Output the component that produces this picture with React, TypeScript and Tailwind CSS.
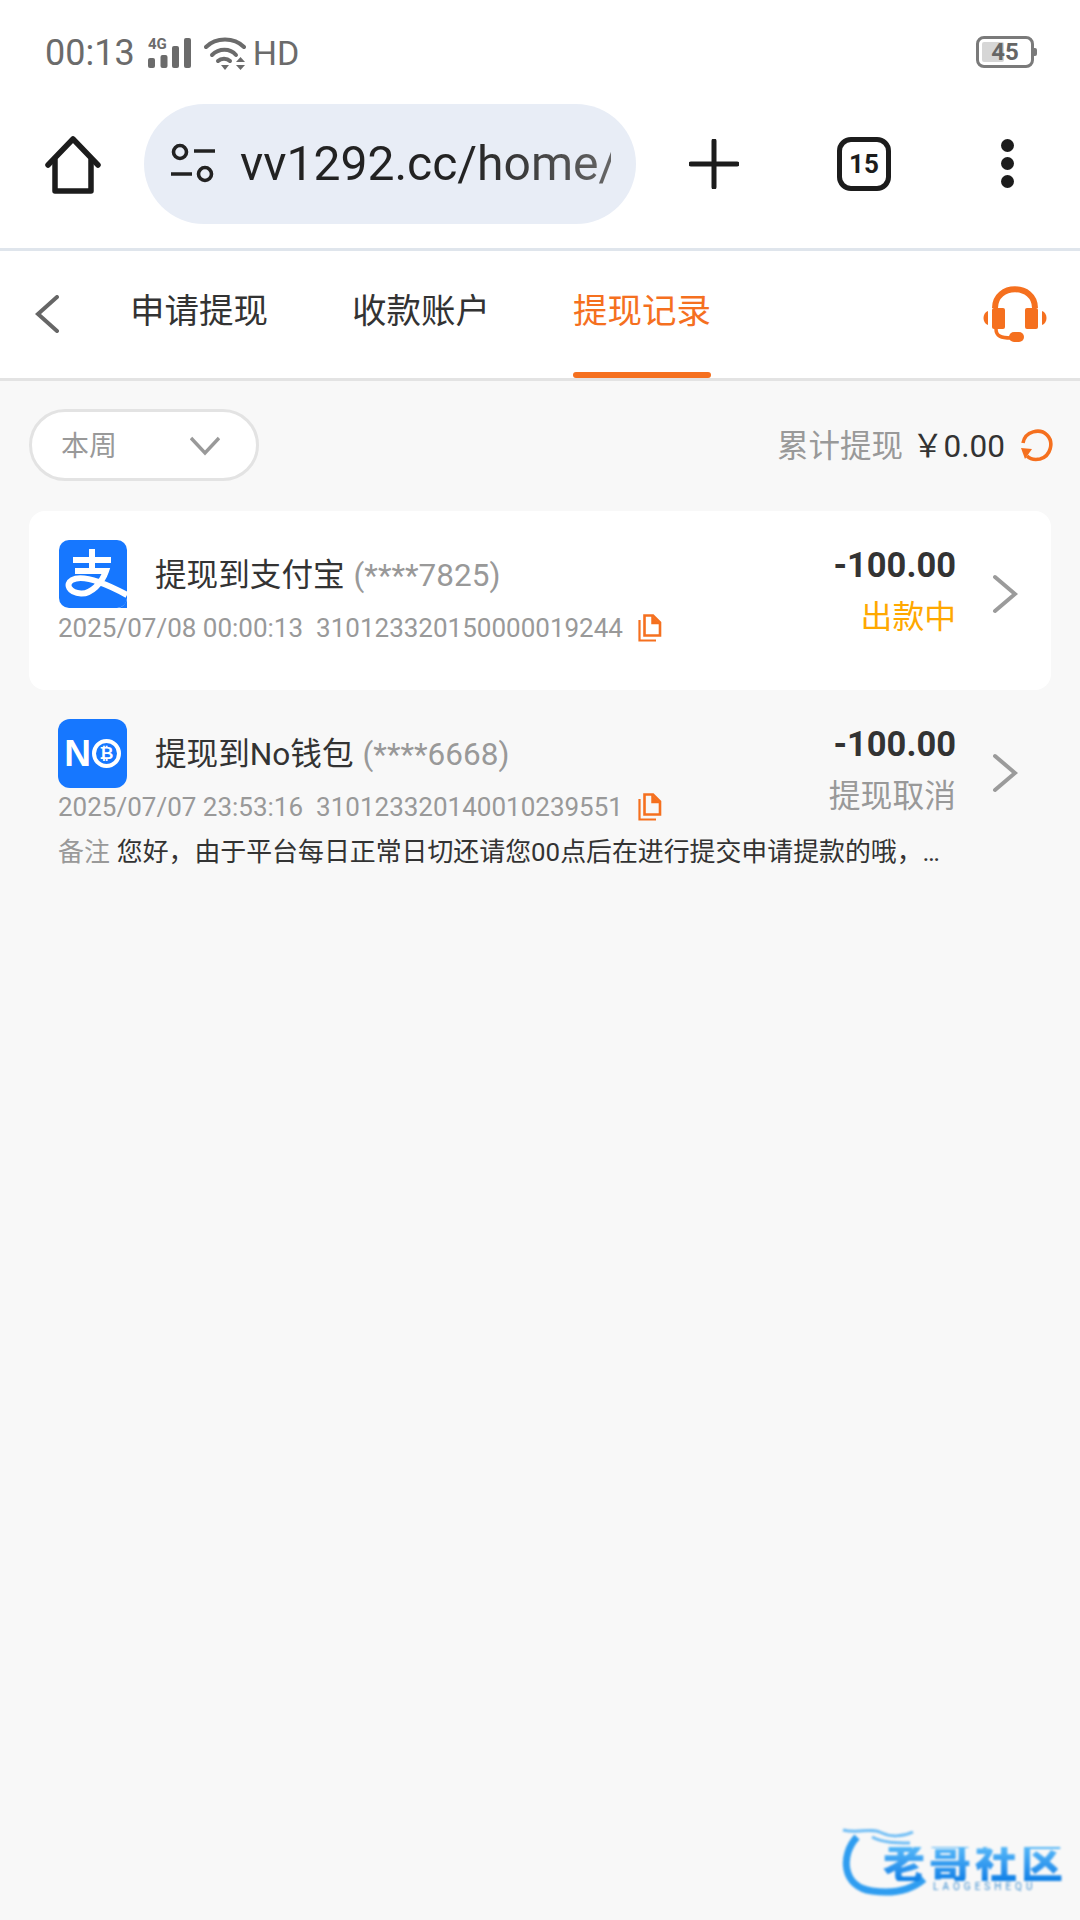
const font = "[font-family:Roboto,'Noto_Sans_CJK_SC',sans-serif]";

function SignalIcon() {
  return (
    <svg width="44" height="32" viewBox="0 0 44 32" className="shrink-0">
      <text x="0" y="12" fontSize="15" fontWeight="700" fill="#6b6b6b" fontFamily="Roboto">4G</text>
      <rect x="0" y="21" width="7" height="10" rx="2" fill="#6b6b6b" />
      <rect x="12.5" y="18" width="7" height="13" rx="2" fill="#6b6b6b" />
      <rect x="24" y="9" width="7" height="22" rx="2" fill="#6b6b6b" />
      <rect x="36" y="1" width="7" height="30" rx="2" fill="#6b6b6b" />
    </svg>
  );
}

function WifiIcon() {
  return (
    <svg width="42" height="33" viewBox="0 0 42 33" className="shrink-0" fill="none" stroke="#6b6b6b" strokeWidth="4" strokeLinecap="round">
      <path d="M2 10 C12 0 30 0 40 10" />
      <path d="M8 18 C15 11 26 11 32 18" />
      <path d="M14 24 C17 21 23 21 26 24" />
      <path d="M17 28 L25 28 L21 33 Z" fill="#6b6b6b" stroke="none" />
      <path d="M32 25 L36.5 20 L41 25 Z" fill="#6b6b6b" stroke="none" />
      <path d="M32 28 L41 28 L36.5 33 Z" fill="#6b6b6b" stroke="none" />
    </svg>
  );
}

function HomeIcon() {
  return (
    <svg width="56" height="58" viewBox="0 0 56 58" fill="none" stroke="#1c1c1c" strokeWidth="5.5" strokeLinejoin="round" strokeLinecap="round">
      <path d="M3 29 L28 3 L53 29" />
      <path d="M10 24 V55 H46 V24" />
    </svg>
  );
}

function TuneIcon() {
  return (
    <svg width="46" height="42" viewBox="0 0 46 42" fill="none" stroke="#222" strokeWidth="3.6" className="shrink-0">
      <circle cx="10" cy="9" r="6.5" />
      <path d="M24 8 H45" />
      <circle cx="35" cy="31" r="6.5" />
      <path d="M1 31 H22" />
    </svg>
  );
}

function CopyIcon() {
  return (
    <svg width="24" height="28" viewBox="0 0 24 28" className="shrink-0" fill="none" stroke="#f5701f" strokeWidth="2.6">
      <path d="M6.5 1.5 H15 L22 8.5 V21.5 H6.5 Z" />
      <path d="M14 2 V9.5 H22" fill="#f5701f" stroke="#f5701f" strokeWidth="1.5" />
      <path d="M1.5 6 V26.5 H18" strokeWidth="2.2" />
    </svg>
  );
}

function ChevronRight() {
  return (
    <svg width="26" height="40" viewBox="0 0 26 40" fill="none" stroke="#9b9b9b" strokeWidth="4" strokeLinecap="round" className="shrink-0">
      <path d="M3 3 L23 20 L3 37" />
    </svg>
  );
}

function AlipayLogo() {
  return (
    <svg width="68" height="68" viewBox="0 0 68 68" className="ml-px shrink-0">
      <rect width="68" height="68" rx="10" fill="#1677ff" />
      <g fill="none" stroke="#fff" strokeWidth="6">
        <path d="M14 20 H52" />
        <path d="M33 9 V31" />
        <path d="M16 31 H47 C43 43 32 54 22 53.5 C10 53 6 44 13 40 C22 35 42 41 68 55" />
      </g>
      <path d="M68 55 V58 C68 63 63 68 58 68 H68 Z" fill="#1677ff" />
    </svg>
  );
}

function NoLogo() {
  return (
    <div className="relative flex h-[69px] w-[69px] shrink-0 items-center justify-center gap-px rounded-[12px] bg-[#1677ff]">
      <span className="text-[37px] leading-none font-black text-white [font-family:'Liberation_Sans',sans-serif]">N</span>
      <span className="flex h-[29px] w-[29px] items-center justify-center rounded-full border-[4px] border-white text-[17px] leading-none font-bold text-white">
        ₿
      </span>
    </div>
  );
}

function Headset() {
  return (
    <svg width="64" height="56" viewBox="0 0 64 56" fill="#f5701f">
      <path d="M12 22 C12 -3 52 -3 52 22" fill="none" stroke="#f5701f" strokeWidth="6" />
      <rect x="9" y="22" width="13" height="21" rx="2" />
      <rect x="42" y="22" width="13" height="21" rx="2" />
      <path d="M5 25 V39 C-1 37 -1 27 5 25 Z" />
      <path d="M59 25 V39 C65 37 65 27 59 25 Z" />
      <path d="M13 43 C13 50 18 52 28 52" fill="none" stroke="#f5701f" strokeWidth="3.5" />
      <rect x="26" y="46" width="15" height="10" rx="5" />
    </svg>
  );
}

function RefreshIcon() {
  return (
    <svg width="33" height="33" viewBox="0 0 33 33" fill="none" stroke="#f5701f" strokeWidth="3.6">
      <path d="M3 14 C5 2 20 -1 27 6 C34 13 31 27 20 30 C15 31 10 30 7 27" />
      <path d="M1 19 L12 20 L5 30 Z" fill="#f5701f" stroke="none" />
    </svg>
  );
}

type RecordProps = {
  logo: React.ReactNode;
  title: string;
  account: string;
  date: string;
  orderNo: string;
  status: string;
  statusClass: string;
  note?: string;
  cardClass: string;
};

function RecordRow({ logo, title, account, date, orderNo, status, statusClass, note, cardClass }: RecordProps) {
  return (
    <div className={cardClass}>
      <div className="flex items-start">
        <div className="min-w-0 flex-1">
          <div className="flex h-[68px] items-center">
            {logo}
            <span className="mt-[4px] ml-[28px] text-[31.6px] leading-none text-[#333]">{title}</span>
            <span className="mt-[4px] ml-[9px] text-[31.5px] leading-none text-[#999]">{account}</span>
          </div>
          <div className="mt-[3px] flex h-[34px] items-center text-[26px] leading-none text-[#999]">
            <span>{date}</span>
            <span className="ml-[13px]">{orderNo}</span>
            <span className="ml-[15px]">
              <CopyIcon />
            </span>
          </div>
        </div>
        <div className="flex flex-col items-end pt-[5px] pr-[36px]">
          <span className="text-[34.5px] leading-[40px] font-bold text-[#333]">-100.00</span>
          <span className={`mt-[12px] text-[31.8px] leading-[40px] ${statusClass}`}>{status}</span>
        </div>
        <div className="mt-[34px] mr-[33px]">
          <ChevronRight />
        </div>
      </div>
      {note && (
        <div className="mt-[12px] flex h-[34px] items-center text-[25.9px] leading-none whitespace-nowrap">
          <span className="text-[#999]">备注</span>
          <span className="ml-[7px] text-[#333]">{note}</span>
        </div>
      )}
    </div>
  );
}

export default function App() {
  return (
    <div className={`relative flex h-[1920px] w-[1080px] flex-col overflow-hidden bg-[#f8f8f8] ${font}`}>
      {/* status bar */}
      <div className="flex h-[104px] shrink-0 items-start justify-between bg-white pt-[34px] pr-[46px] pl-[45px]">
        <div className="flex items-center text-[#6b6b6b]">
          <span className="text-[36px] leading-[38px]">00:13</span>
          <span className="ml-[13px]"><SignalIcon /></span>
          <span className="ml-[12px]"><WifiIcon /></span>
          <span className="ml-[7px] text-[34px] leading-[38px]">HD</span>
        </div>
        <div className="relative mt-[2px] h-[32px] w-[58px] rounded-[8px] border-[3px] border-[#7a7a7a]">
          <div className="absolute top-[3px] bottom-[3px] left-[3px] w-[22px] rounded-[2px] bg-[#d6d6d6]" />
          <span className="absolute inset-0 flex items-center justify-center text-[24px] leading-none font-bold text-[#666]">45</span>
          <div className="absolute top-[9px] -right-[6px] h-[8px] w-[3px] rounded-r-[2px] bg-[#7a7a7a]" />
        </div>
      </div>

      {/* browser toolbar */}
      <div className="flex h-[147px] shrink-0 items-start border-b-[3px] border-[#dfe5ec] bg-white pl-[45px]">
        <div className="mt-[32px]"><HomeIcon /></div>
        <div className="ml-[43px] flex h-[120px] w-[492px] items-center overflow-hidden rounded-full bg-[#e8edf6] pr-[25px] pl-[26px]">
          <TuneIcon />
          <div className="ml-[24px] overflow-hidden bg-gradient-to-r from-[#222] from-60% to-[#666] bg-clip-text text-[48px] leading-none whitespace-nowrap text-transparent">
            vv1292.cc/home/
          </div>
        </div>
        <svg width="50" height="50" viewBox="0 0 50 50" className="mt-[35px] ml-[53px]" stroke="#1c1c1c" strokeWidth="5" strokeLinecap="round">
          <path d="M25 2 V48 M2 25 H48" />
        </svg>
        <div className="mt-[33px] ml-[98px] flex h-[54px] w-[54px] items-center justify-center rounded-[14px] border-[5px] border-[#1c1c1c] text-[26px] leading-none font-bold text-[#1c1c1c]">
          15
        </div>
        <div className="mt-[35px] ml-[110px] flex flex-col gap-[5px]">
          <div className="h-[13px] w-[13px] rounded-full bg-[#1c1c1c]" />
          <div className="h-[13px] w-[13px] rounded-full bg-[#1c1c1c]" />
          <div className="h-[13px] w-[13px] rounded-full bg-[#1c1c1c]" />
        </div>
      </div>

      {/* tabs */}
      <div className="flex h-[130px] shrink-0 items-stretch border-b-[3px] border-[#e3e3e3] bg-white">
        <svg width="24" height="38" viewBox="0 0 24 38" fill="none" stroke="#666" strokeWidth="4" strokeLinecap="round" className="mt-[44px] ml-[35px]">
          <path d="M22 2 L3 19 L22 36" />
        </svg>
        <div className="ml-[71px] flex h-[127px] items-start pt-[37px] text-[34.5px] leading-[46px] text-[#333]">申请提现</div>
        <div className="ml-[84px] flex h-[127px] items-start pt-[37px] text-[34.5px] leading-[46px] text-[#333]">收款账户</div>
        <div className="relative ml-[83px] flex h-[127px] items-start pt-[37px] text-[34.5px] leading-[46px] text-[#f5701f]">
          提现记录
          <div className="absolute right-0 bottom-0 left-0 h-[6px] rounded-[3px] bg-[#f5701f]" />
        </div>
        <div className="mt-[35px] ml-auto mr-[33px]">
          <Headset />
        </div>
      </div>

      {/* filter row */}
      <div className="flex items-center justify-between pt-[28px] pr-[27px] pl-[29px]">
        <div className="flex h-[72px] w-[230px] items-center rounded-full border-[3px] border-[#e3e3e3] bg-white pr-[36px] pl-[29px]">
          <span className="mt-[4px] text-[28px] leading-none text-[#999]">本周</span>
          <svg width="30" height="20" viewBox="0 0 30 20" fill="none" stroke="#999" strokeWidth="3.4" className="mt-[2px] ml-auto">
            <path d="M1 2 L15 17 L29 2" />
          </svg>
        </div>
        <div className="flex items-center">
          <span className="mt-[4px] text-[31.5px] leading-none text-[#999]">累计提现</span>
          <span className="mt-[4px] ml-[9px] text-[31.5px] leading-none text-[#333]">￥0.00</span>
          <span className="ml-[15px]"><RefreshIcon /></span>
        </div>
      </div>

      {/* records */}
      <div className="mt-[30px] px-[29px]">
        <RecordRow
          logo={<AlipayLogo />}
          title="提现到支付宝"
          account="(****7825)"
          date="2025/07/08 00:00:13"
          orderNo="310123320150000019244"
          status="出款中"
          statusClass="text-[#ffa800]"
          cardClass="h-[179px] rounded-[16px] bg-white pt-[29px] pl-[29px]"
        />
        <RecordRow
          logo={<NoLogo />}
          title="提现到No钱包"
          account="(****6668)"
          date="2025/07/07 23:53:16"
          orderNo="310123320140010239551"
          status="提现取消"
          statusClass="text-[#999]"
          note="您好，由于平台每日正常日切还请您00点后在进行提交申请提款的哦，…"
          cardClass="pt-[29px] pl-[29px]"
        />
      </div>

      {/* watermark */}
      <div className="absolute top-[1825px] left-[842px] h-[76px] w-[222px] blur-[0.8px]">
        <svg width="222" height="76" viewBox="0 0 222 76" fill="none" className="absolute inset-0">
          <path d="M15 12 C-2 30 0 62 30 66 C50 69 68 66 82 54" stroke="#2f9df0" strokeWidth="7" />
          <path d="M1 5 C18 9 28 2 40 8 C48 12 60 12 71 7 M30 12 C42 18 54 18 68 18" stroke="#6fbdf5" strokeWidth="3" />
        </svg>
        <span className="absolute top-[22px] left-[41px] bg-gradient-to-b from-[#55b7f8] to-[#0b7fe6] bg-clip-text text-[42px] leading-[34px] font-black tracking-[4px] whitespace-nowrap text-transparent">
          老哥社区
        </span>
        <span className="absolute top-[57px] left-[91px] text-[10px] leading-none tracking-[4px] text-[#3f8fd0]">LAOGESHEQU</span>
      </div>
    </div>
  );
}
